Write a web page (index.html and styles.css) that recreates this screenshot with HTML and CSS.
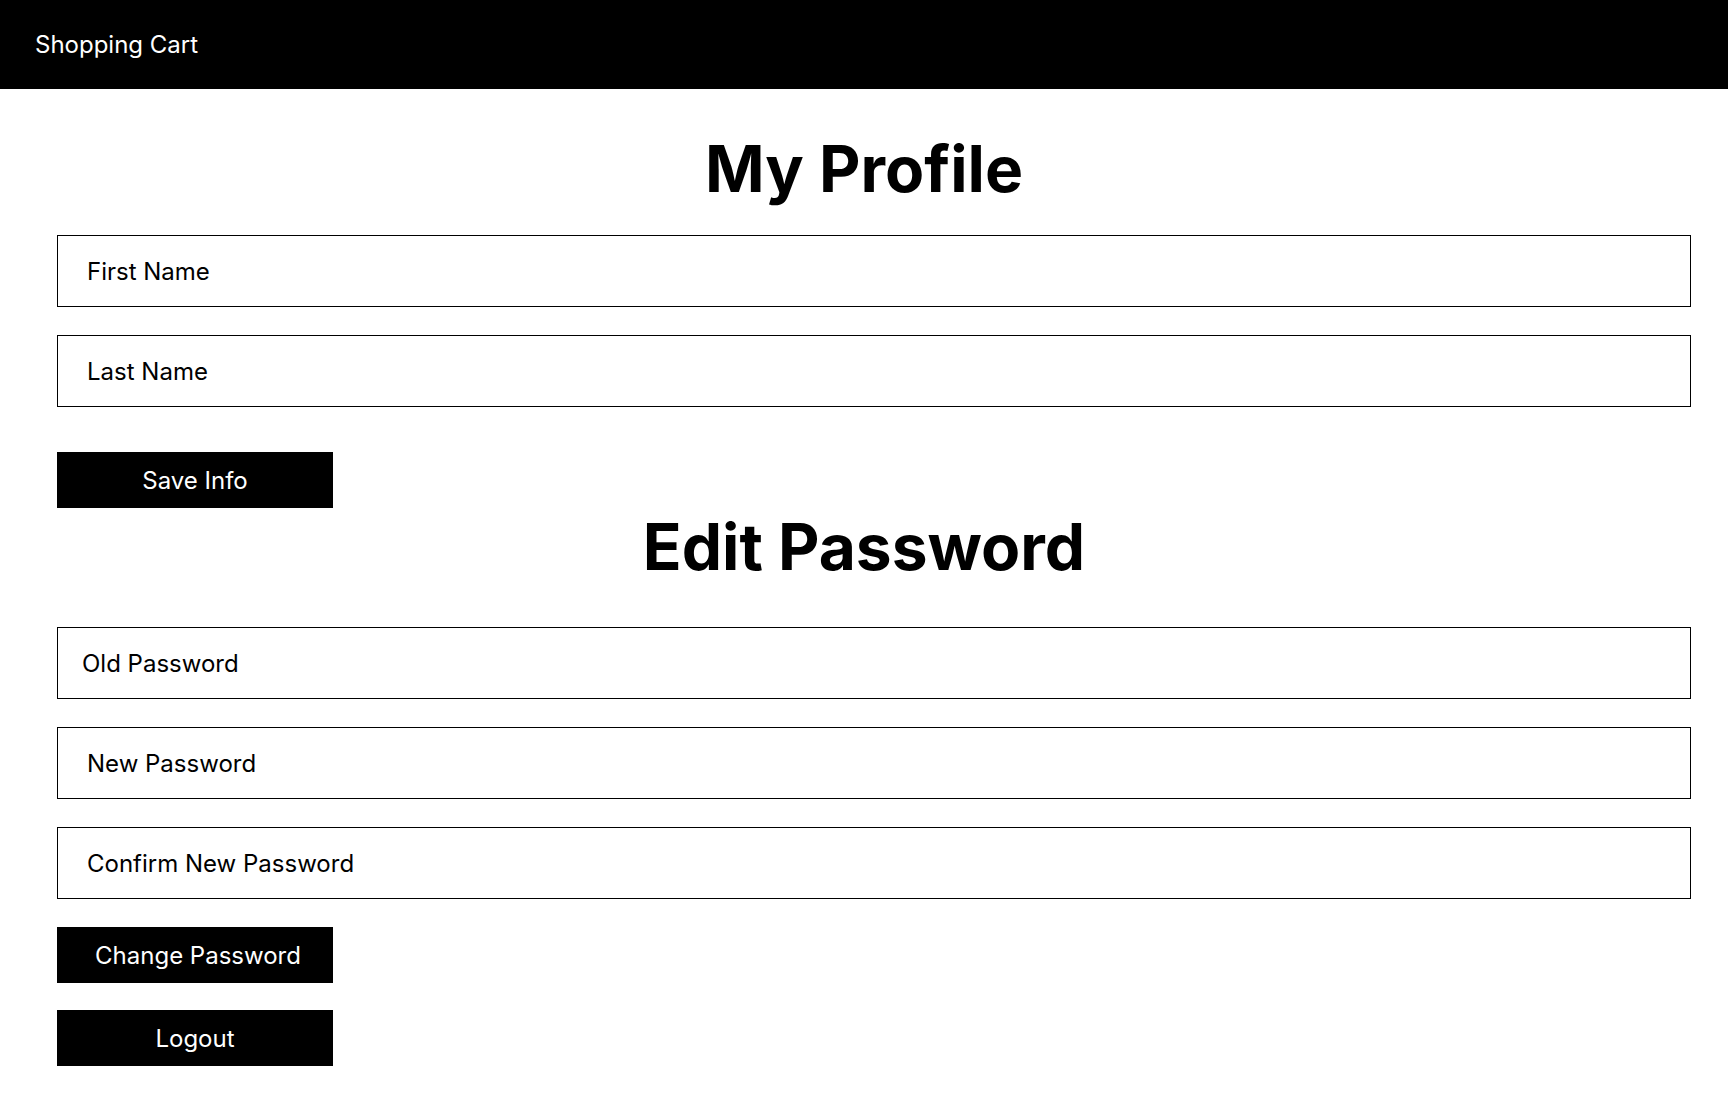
FILE: index.html
```html
<!DOCTYPE html>
<html lang="en">
<head>
    <meta charset="UTF-8">
    <meta name="viewport" content="width=device-width, initial-scale=1.0">
    <title>My Profile</title>
    <link rel="stylesheet" href="styles.css">
</head>
<body>

    <header class="topbar">
        <span class="brand">Shopping Cart</span>
    </header>

    <main class="profile">
        <h1 class="title">My Profile</h1>
        <input class="field" type="text" placeholder="First Name">
        <input class="field" type="text" placeholder="Last Name">
        <button class="btn btn-save">Save Info</button>

        <h1 class="title title-pw">Edit Password</h1>
        <input class="field field-tight" type="password" placeholder="Old Password">
        <input class="field" type="password" placeholder="New Password">
        <input class="field" type="password" placeholder="Confirm New Password">
        <button class="btn btn-change">Change Password</button>
        <button class="btn btn-logout">Logout</button>
    </main>

</body>
</html>
```

FILE: styles.css
```css
body {
    margin: 0;
    padding: 0;
    font-family: Inter, "Noto Sans", sans-serif;
    background-color: #fff;
    color: #000;
}

.topbar {
    height: 89px;
    background-color: #000;
    display: flex;
    align-items: center;
    padding-left: 35px;
}

.brand {
    color: #fff;
    font-size: 24px;
}

.profile {
    display: flex;
    flex-direction: column;
    align-items: flex-start;
    padding: 0 37px 40px 57px;
}

.title {
    align-self: stretch;
    margin: 41px -37px 27px -57px;
    text-align: center;
    font-size: 64px;
    font-weight: 700;
    line-height: 78px;
}

.title-pw {
    margin-top: 0;
    margin-bottom: 41px;
}

.field {
    box-sizing: border-box;
    width: 100%;
    height: 72px;
    margin: 0 0 28px 0;
    padding: 0 0 0 29px;
    border: 1px solid #000;
    border-radius: 0;
    font-family: Inter, "Noto Sans", sans-serif;
    font-size: 24px;
    color: #000;
    outline: none;
}

.field::placeholder {
    color: #000;
    opacity: 1;
}

.field-tight {
    padding-left: 24px;
}

.btn {
    width: 276px;
    height: 56px;
    border: none;
    background-color: #000;
    color: #fff;
    font-family: Inter, "Noto Sans", sans-serif;
    font-size: 24px;
    cursor: pointer;
    margin: 0;
    padding: 0;
}

.btn-save {
    margin-top: 17px;
}

.btn-change {
    padding-left: 6px;
}

.btn-logout {
    margin-top: 27px;
}
```
